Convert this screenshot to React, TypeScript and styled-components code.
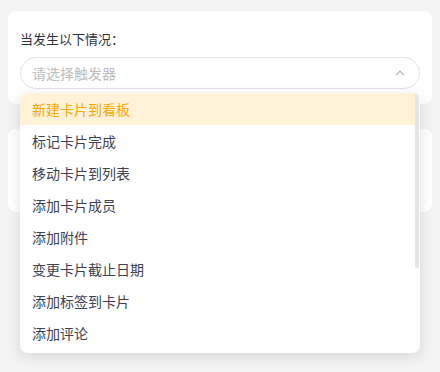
import React from "react";
import styled, { createGlobalStyle } from "styled-components";

const Global = createGlobalStyle`
  html, body { margin: 0; padding: 0; background: #f3f3f3; }
  body { font-family: "Noto Sans CJK SC", "Noto Sans", sans-serif; }
  * { box-sizing: border-box; }
`;

const Page = styled.div`
  width: 440px;
  height: 372px;
  padding: 11px 8px 0;
  display: flex;
  flex-direction: column;
  gap: 25px;
  overflow: hidden;
`;

const Card = styled.div<{ $h: number; $raised?: boolean }>`
  position: relative;
  z-index: ${(p) => (p.$raised ? 2 : 1)};
  background: #ffffff;
  border-radius: 8px;
  height: ${(p) => p.$h}px;
  padding: 18px 12px 15px;
  display: flex;
  flex-direction: column;
  gap: 8px;
`;

const Label = styled.div`
  font-size: 13px;
  line-height: 20px;
  color: #2e3243;
`;

const SelectWrap = styled.div`
  position: relative;
`;

const Select = styled.div`
  height: 32px;
  border: 1px solid #e4e4e6;
  border-radius: 16px;
  padding: 0 11px;
  display: flex;
  align-items: center;
  justify-content: space-between;
  font-size: 14px;
  color: #bdbdbd;
`;

const Chevron = styled.svg`
  width: 12px;
  height: 12px;
  margin-right: 2px;
`;

const Dropdown = styled.div`
  position: absolute;
  top: 36px;
  left: 0;
  right: 0;
  height: 260px;
  background: #fff;
  border-radius: 8px;
  box-shadow: 0 3px 14px rgba(0, 0, 0, 0.12);
  overflow: hidden;
  display: flex;
`;

const List = styled.div`
  flex: 1;
  display: flex;
  flex-direction: column;
`;

const Track = styled.div`
  width: 5px;
  padding-right: 1px;
  display: flex;
  flex-direction: column;
`;

const Thumb = styled.div`
  height: 175px;
  background: #e4e5e9;
  border-radius: 0 0 3px 3px;
`;

const Item = styled.div<{ $active?: boolean }>`
  height: 32px;
  flex: none;
  padding: 0 12px;
  display: flex;
  align-items: center;
  font-size: 14px;
  color: ${(p) => (p.$active ? "#f5a800" : "#3d4254")};
  background: ${(p) => (p.$active ? "#fff2d8" : "transparent")};
`;

const items = [
  "新建卡片到看板",
  "标记卡片完成",
  "移动卡片到列表",
  "添加卡片成员",
  "添加附件",
  "变更卡片截止日期",
  "添加标签到卡片",
  "添加评论",
];

export default function App() {
  return (
    <>
      <Global />
      <Page>
        <Card $h={93} $raised>
          <Label>当发生以下情况：</Label>
          <SelectWrap>
            <Select>
              <span>请选择触发器</span>
              <Chevron viewBox="0 0 12 12">
                <path d="M2 8 L6 4 L10 8" fill="none" stroke="#b4b4b8" strokeWidth="1.1" />
              </Chevron>
            </Select>
            <Dropdown>
              <List>
                {items.map((t, i) => (
                  <Item key={t} $active={i === 0}>{t}</Item>
                ))}
              </List>
              <Track>
                <Thumb />
              </Track>
            </Dropdown>
          </SelectWrap>
        </Card>
        <Card $h={83} />
      </Page>
    </>
  );
}
